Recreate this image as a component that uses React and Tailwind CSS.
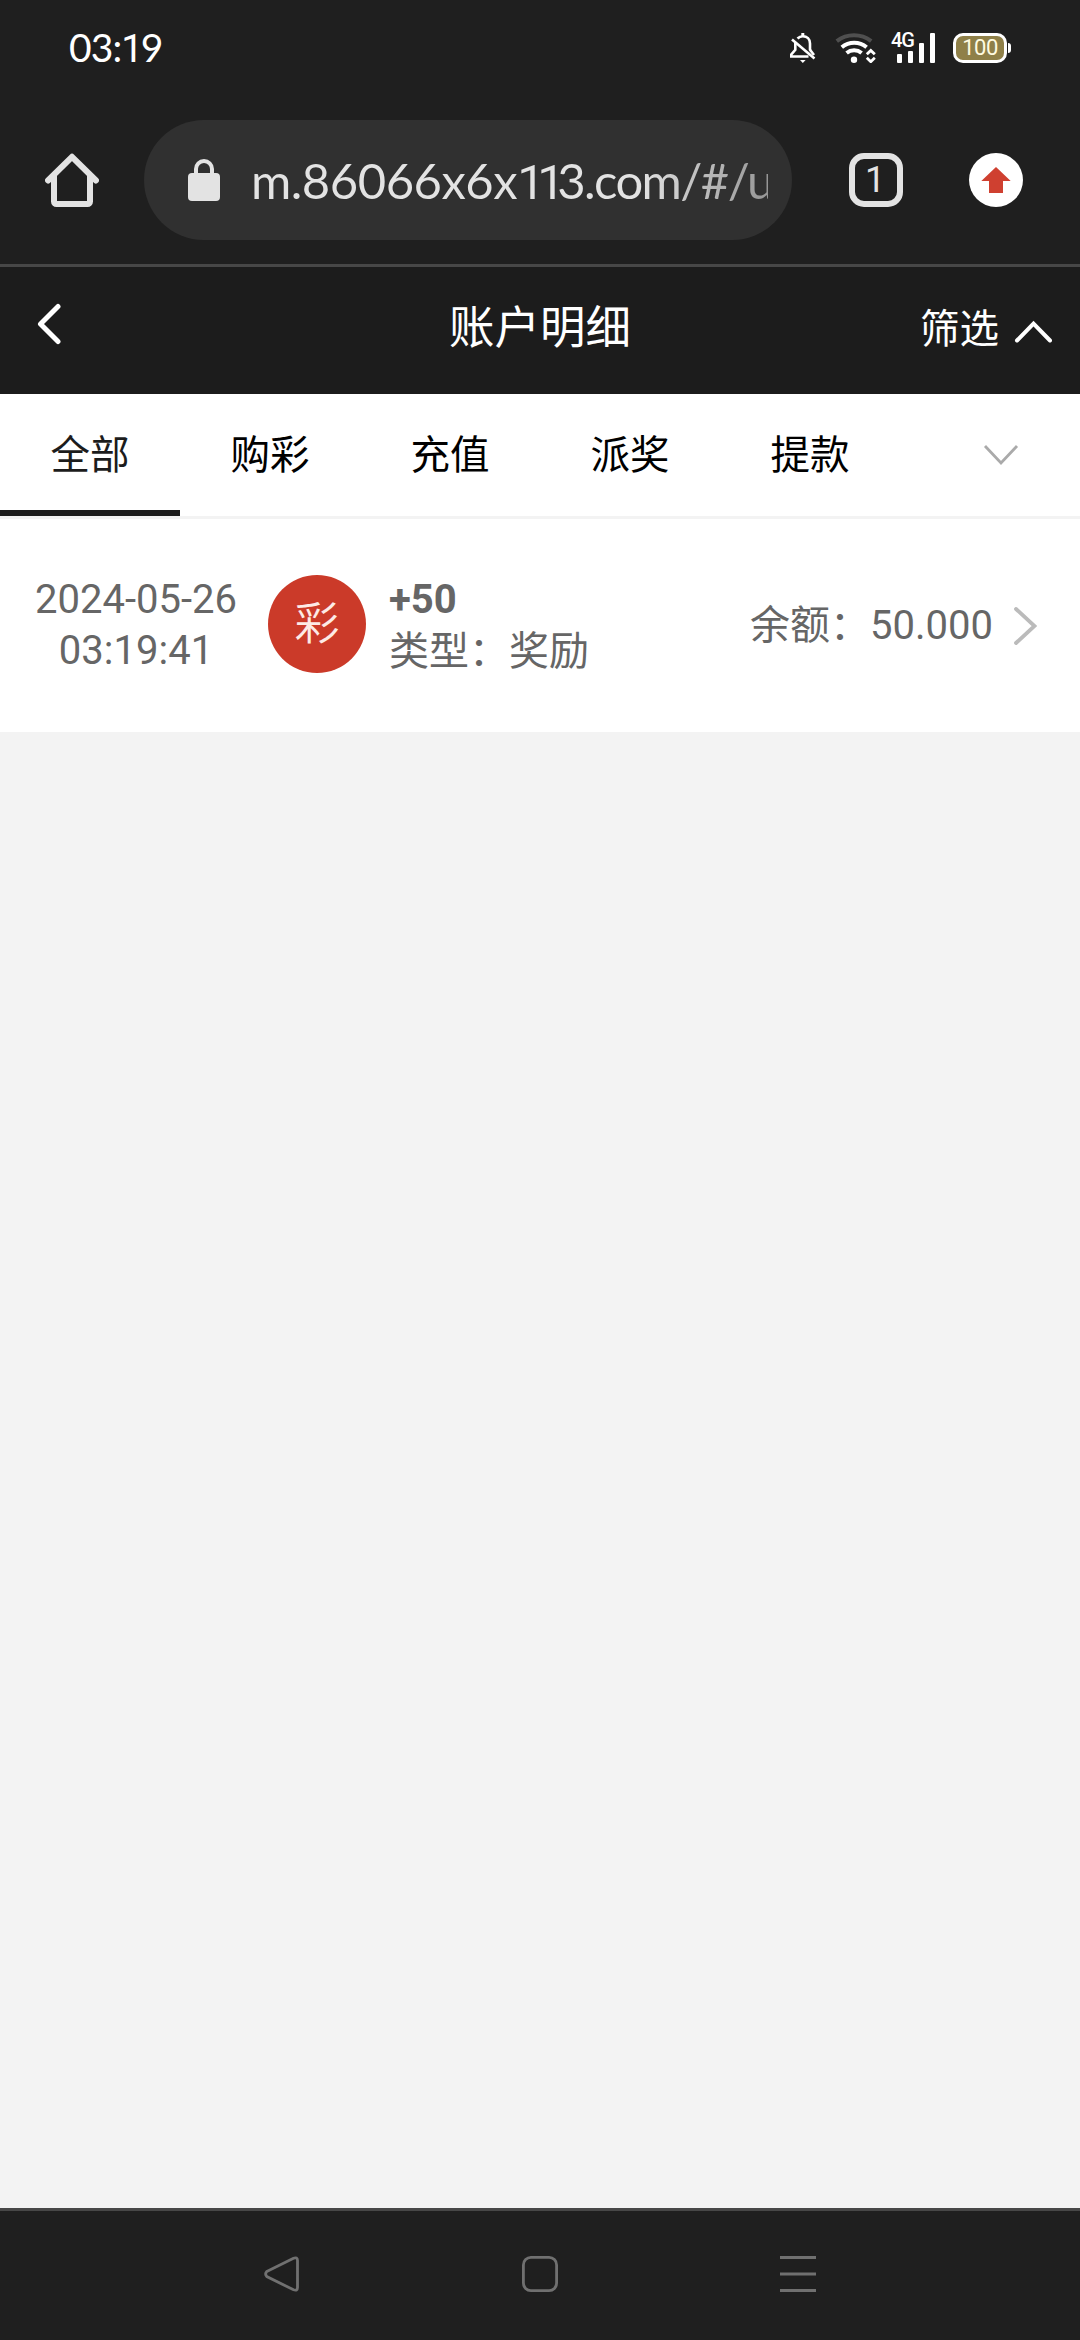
import React, { useState } from "react";

const tabs = ["全部", "购彩", "充值", "派奖", "提款"];

const records = [
  {
    date: "2024-05-26",
    time: "03:19:41",
    badge: "彩",
    amount: "+50",
    type: "奖励",
    balance: "50.000",
  },
];

const MutedBellIcon = () => (
  <svg width="26" height="30" viewBox="0 0 26 30" fill="none" stroke="#fff" strokeWidth="2.6">
    <path d="M7.5 5.5C9 4 10.800 3.200 12.800 3.200c4.200 0 7.200 3 7.200 7.300V17" />
    <path d="M12.800 0v3.500" strokeWidth="3" />
    <path d="M5.300 9.500v7.300L1.300 21.500v2h17.200" />
    <path d="M2 6.500l22.500 19" />
    <path d="M19.800 16.500l4.200 5.500" />
    <path d="M10 27h5.600l-2.800 3z" fill="#fff" stroke="none" />
  </svg>
);

const WifiIcon = () => (
  <svg width="41" height="30" viewBox="0 0 41 30" fill="none" stroke="#fff" strokeWidth="4">
    <path d="M1.800 8.200a28 28 0 0 1 34.400 0" stroke="#4f4f4f" />
    <path d="M6.800 14.200a19.500 19.500 0 0 1 24.800 0" />
    <path d="M11.600 20a12 12 0 0 1 15 0" />
    <circle cx="19" cy="26.800" r="3.200" fill="#fff" stroke="none" />
    <path d="M31.800 21.300l4-3.900 4 3.900M31.800 24.800l4 3.900 4-3.900" strokeWidth="2.800" />
  </svg>
);

const SignalIcon = () => (
  <svg width="45" height="30" viewBox="0 0 45 30" fill="#fff">
    <rect x="6" y="21" width="5" height="9" rx="1" />
    <rect x="17" y="18" width="5" height="12" rx="1" />
    <rect x="28" y="10" width="5" height="20" rx="1" />
    <rect x="39" y="0" width="5" height="30" rx="1" />
  </svg>
);

const HomeIcon = () => (
  <svg width="54" height="54" viewBox="0 0 54 54" fill="none" stroke="#e3e3e3" strokeWidth="6">
    <path d="M3 27.500L27 3.800l24 23.700" strokeLinecap="round" strokeLinejoin="round" />
    <path d="M9 23v25.500a2.500 2.500 0 0 0 2.500 2.500h31a2.500 2.500 0 0 0 2.500-2.500V23" />
  </svg>
);

const LockIcon = () => (
  <svg width="32" height="42" viewBox="0 0 32 42">
    <path d="M8 16V10a8 8 0 0 1 16 0v6" fill="none" stroke="#e3e3e3" strokeWidth="4" />
    <rect x="0" y="14" width="32" height="28" rx="4" fill="#e3e3e3" />
  </svg>
);

const UpdateIcon = () => (
  <svg width="54" height="54" viewBox="0 0 54 54">
    <circle cx="27" cy="27" r="27" fill="#fff" />
    <path d="M27 14L12.300 28H20v12h14V28h7.700z" fill="#cf4030" />
  </svg>
);

const StatusBar = () => (
  <div className="flex h-24 items-center justify-between pl-[69px] pr-[69px] font-['Lato','Noto_Sans',sans-serif] text-white">
    <span className="text-[39px] leading-none tracking-[-0.9px]">
      03:<span className="font-['Roboto',sans-serif] tracking-[-2.500px]">1</span>9
    </span>
    <div className="flex items-center">
      <MutedBellIcon />
      <div className="ml-[19px] flex">
        <WifiIcon />
      </div>
      <div className="relative ml-[15px] flex">
        <SignalIcon />
        <span className="absolute -top-px left-0 font-['Roboto',sans-serif] text-[20px] leading-[17px] font-medium tracking-[-1px]">
          4G
        </span>
      </div>
      <div className="ml-[17px] flex items-center">
        <div className="flex h-[30px] w-[54px] items-center justify-center rounded-[10px] border-3 border-white bg-[#8f8048] font-['Roboto',sans-serif] text-[22px] leading-none tracking-[-0.5px] text-[#fffbe0]">
          100
        </div>
        <div className="ml-px h-2.5 w-[3px] rounded-r-sm bg-white" />
      </div>
    </div>
  </div>
);

const BrowserBar = () => (
  <div className="flex h-[171px] items-center border-b-3 border-[#474747] pl-[45px] font-['Lato','Noto_Sans',sans-serif]">
    <HomeIcon />
    <div className="ml-[45px] flex h-[120px] w-[648px] items-center rounded-full bg-[#303030] pl-11 pr-6">
      <LockIcon />
      <div className="ml-[31px] h-16 flex-1 overflow-hidden whitespace-nowrap bg-linear-to-r from-[#e3e3e3] from-75% to-[#969696] bg-clip-text text-[49px] leading-[64px] tracking-[-0.5px] text-transparent">
        m.86066x6x
        <span className="font-['Roboto',sans-serif] tracking-[-7.500px]">11</span>
        <span className="tracking-[-1.600px]">3.com/#/u</span>
      </div>
    </div>
    <div className="ml-[57px] flex h-[54px] w-[54px] items-center justify-center rounded-[15px] border-6 border-[#e3e3e3] pr-0.5 font-['Roboto',sans-serif] text-4xl leading-none text-[#e3e3e3]">
      1
    </div>
    <div className="ml-[66px]">
      <UpdateIcon />
    </div>
  </div>
);

const PageHeader = () => (
  <div className="grid h-[127px] grid-cols-3 items-center bg-[#1c1c1c] text-white">
    <button className="w-fit pb-[13px] pl-[37px]">
      <svg width="24" height="42" viewBox="0 0 24 42" fill="none" stroke="#fff" strokeWidth="5">
        <path d="M21 3.500L3.500 21 21 38.500" strokeLinecap="round" strokeLinejoin="round" />
      </svg>
    </button>
    <h1 className="pb-[3px] text-center text-[45.5px] leading-none">账户明细</h1>
    <button className="flex items-center justify-end pr-7 text-[39.5px] leading-none">
      <span className="pb-px">筛选</span>
      <svg className="ml-[15px] mt-0.5" width="38" height="23" viewBox="0 0 38 23" fill="none" stroke="#fff" strokeWidth="4">
        <path d="M3 20.500L19.500 3.500 36 20.500" strokeLinecap="round" />
      </svg>
    </button>
  </div>
);

const TabBar = ({ active, onChange }) => (
  <div className="flex h-[125px] border-b-3 border-[#f3f3f3] bg-white">
    {tabs.map((tab, i) => (
      <button
        key={tab}
        onClick={() => onChange(i)}
        className={`h-[122px] w-[180px] border-b-6 pt-[7px] text-[39.5px] leading-none ${
          active === i ? "border-[#1c1c1c] text-[#1c1c1c]" : "border-transparent text-black"
        }`}
      >
        {tab}
      </button>
    ))}
    <button className="flex flex-1 items-center justify-center pl-[21px]">
      <svg width="36" height="22" viewBox="0 0 36 22" fill="none" stroke="#aaa" strokeWidth="2.800">
        <path d="M2 2l16 17L34 2" />
      </svg>
    </button>
  </div>
);

const RecordRow = ({ record }) => (
  <div className="flex h-[213px] items-start bg-white pt-[55px] text-[40px] leading-[51px] text-[#666]">
    <div className="ml-[34px] w-[204px] text-center">
      <p>{record.date}</p>
      <p>{record.time}</p>
    </div>
    <div className="ml-[30px] mt-px flex h-[98px] w-[98px] items-center justify-center rounded-full bg-[#cb3a29] text-[45px] leading-none font-[350] text-[#fdeae6]">
      {record.badge}
    </div>
    <div className="ml-[23px]">
      <p className="font-bold">{record.amount}</p>
      <p className="pt-px">类型：{record.type}</p>
    </div>
    <div className="ml-auto mr-[43px] flex h-[103px] items-center">
      <span>余额：{record.balance}</span>
      <svg className="ml-[21px]" width="23" height="38" viewBox="0 0 23 38" fill="none" stroke="#bbb" strokeWidth="3.800">
        <path d="M2 2l18.500 17L2 36" strokeLinecap="round" />
      </svg>
    </div>
  </div>
);

const NavigationBar = () => (
  <div className="flex h-[132px] items-start border-t-3 border-[#474747] bg-[#1f1f1f] pl-[264px] pt-[45px]">
    <svg width="36" height="36" viewBox="0 0 36 36" fill="none" stroke="#707070" strokeWidth="2.800">
      <path d="M2.800 15.500L29.500 2.200Q33.500 0.800 33.500 4.500v27Q33.500 35.200 29.500 33.800L2.800 20.500Q0.500 18 2.800 15.500z" />
    </svg>
    <svg className="ml-[222px]" width="36" height="36" viewBox="0 0 36 36" fill="none" stroke="#707070" strokeWidth="2.800">
      <rect x="1.400" y="1.400" width="33.200" height="33.200" rx="7.500" />
    </svg>
    <svg className="ml-[222px]" width="36" height="36" viewBox="0 0 36 36" fill="none" stroke="#707070" strokeWidth="3">
      <path d="M0 1.500h36M0 18h36M0 34.500h36" />
    </svg>
  </div>
);

const App = () => {
  const [active, setActive] = useState(0);

  return (
    <div className="flex h-[2340px] w-[1080px] flex-col overflow-hidden bg-[#1f1f1f] font-['Roboto','Noto_Sans_CJK_SC',sans-serif]">
      <StatusBar />
      <BrowserBar />
      <PageHeader />
      <TabBar active={active} onChange={setActive} />
      {/* Records */}
      <div className="flex-1 bg-[#f3f3f3]">
        {records.map((record) => (
          <RecordRow key={record.date + record.time} record={record} />
        ))}
      </div>
      <NavigationBar />
    </div>
  );
};

export default App;
